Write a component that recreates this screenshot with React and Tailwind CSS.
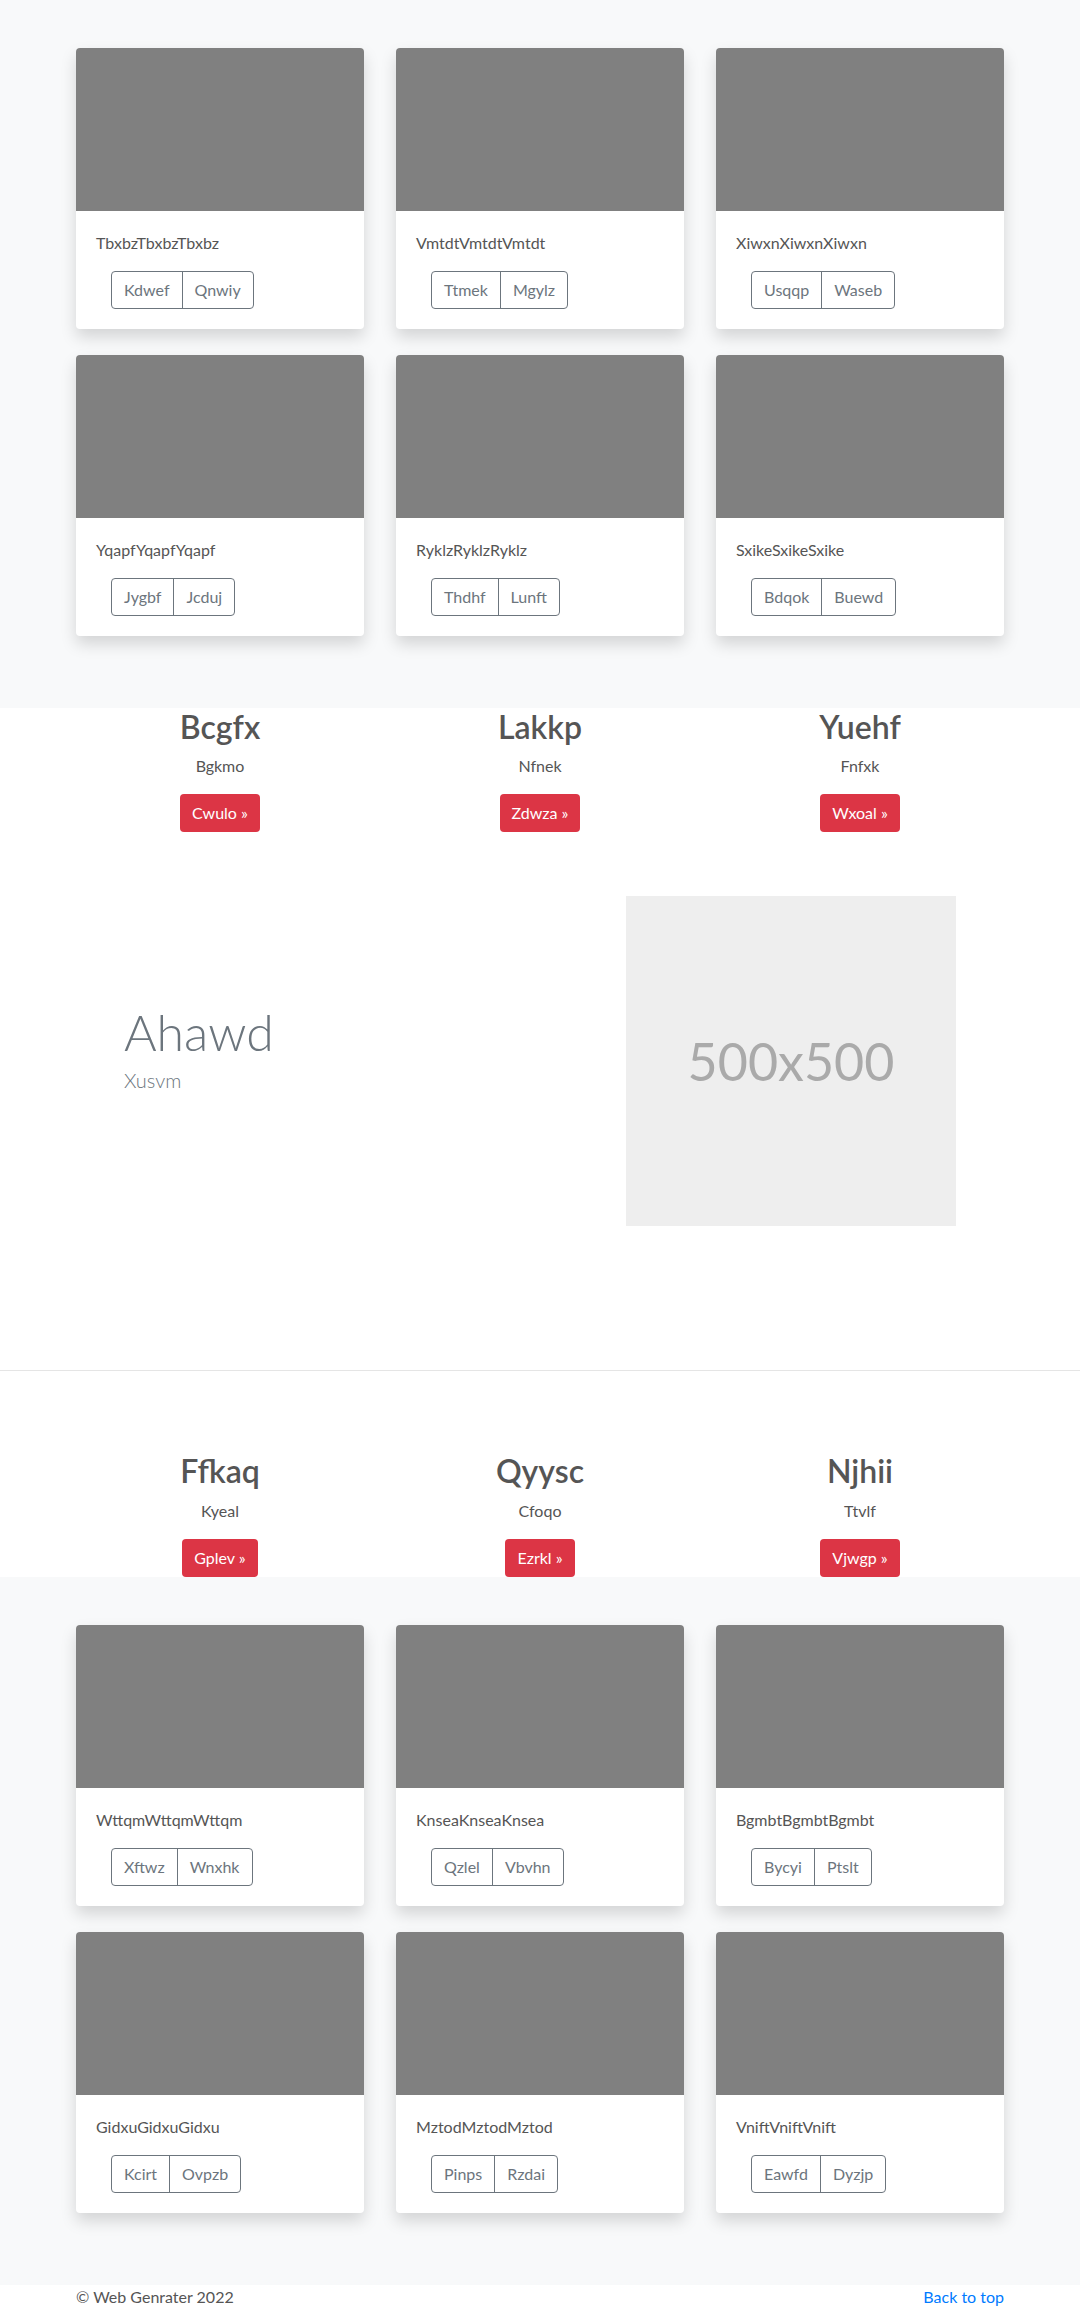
const topCards = [
  { title: "TbxbzTbxbzTbxbz", a: "Kdwef", b: "Qnwiy" },
  { title: "VmtdtVmtdtVmtdt", a: "Ttmek", b: "Mgylz" },
  { title: "XiwxnXiwxnXiwxn", a: "Usqqp", b: "Waseb" },
  { title: "YqapfYqapfYqapf", a: "Jygbf", b: "Jcduj" },
  { title: "RyklzRyklzRyklz", a: "Thdhf", b: "Lunft" },
  { title: "SxikeSxikeSxike", a: "Bdqok", b: "Buewd" },
];

const bottomCards = [
  { title: "WttqmWttqmWttqm", a: "Xftwz", b: "Wnxhk" },
  { title: "KnseaKnseaKnsea", a: "Qzlel", b: "Vbvhn" },
  { title: "BgmbtBgmbtBgmbt", a: "Bycyi", b: "Ptslt" },
  { title: "GidxuGidxuGidxu", a: "Kcirt", b: "Ovpzb" },
  { title: "MztodMztodMztod", a: "Pinps", b: "Rzdai" },
  { title: "VniftVniftVnift", a: "Eawfd", b: "Dyzjp" },
];

const features1 = [
  { h: "Bcgfx", p: "Bgkmo", btn: "Cwulo" },
  { h: "Lakkp", p: "Nfnek", btn: "Zdwza" },
  { h: "Yuehf", p: "Fnfxk", btn: "Wxoal" },
];

const features2 = [
  { h: "Ffkaq", p: "Kyeal", btn: "Gplev" },
  { h: "Qyysc", p: "Cfoqo", btn: "Ezrkl" },
  { h: "Njhii", p: "Ttvlf", btn: "Vjwgp" },
];

function Card({ title, a, b }) {
  return (
    <div className="bg-white rounded-[4px] overflow-hidden shadow-[0_8px_16px_rgba(0,0,0,0.15)]">
      <div className="h-[163px] bg-[#808080]" />
      <div className="p-5">
        <p className="text-[16px] leading-6 text-[#555] mb-4">{title}</p>
        <div className="ml-[15px] inline-flex border border-[#6c757d] rounded-[4px] text-[#6c757d] text-[16px] leading-6">
          <span className="px-3 py-[6px]">{a}</span>
          <span className="px-3 py-[6px] border-l border-[#6c757d]">{b}</span>
        </div>
      </div>
    </div>
  );
}

function Album({ cards }) {
  return (
    <section className="bg-[#f8f9fa] pt-12 pb-[72px]">
      <div className="w-[928px] mx-auto grid grid-cols-3 gap-x-8 gap-y-[26px]">
        {cards.map((c) => (
          <Card key={c.title} {...c} />
        ))}
      </div>
    </section>
  );
}

function Features({ items }) {
  return (
    <div className="w-[960px] mx-auto grid grid-cols-3 text-center">
      {items.map((f) => (
        <div key={f.h} className="flex flex-col items-center">
          <h2 className="text-[32px] leading-[1.2] font-semibold text-[#555] mb-2">{f.h}</h2>
          <p className="text-[16px] leading-6 text-[#555] mb-4">{f.p}</p>
          <span className="bg-[#dc3545] text-white text-[16px] leading-6 px-3 py-[7px] rounded-[4px]">
            {f.btn} »
          </span>
        </div>
      ))}
    </div>
  );
}

export default function App() {
  return (
    <div className="font-[Lato,sans-serif] bg-white min-h-[2307px]">
      <Album cards={topCards} />

      <Features items={features1} />

      <section className="pt-16 pb-[144px]">
        <div className="w-[960px] mx-auto flex">
          <div className="w-1/2 pl-16 pt-[106px]">
            <h1 className="text-[50px] leading-[1.2] font-light text-[#6c757d]">Ahawd</h1>
            <p className="text-[20px] leading-[1.5] font-light text-[#6c757d] mt-[3px]">Xusvm</p>
          </div>
          <div className="w-1/2 flex justify-end pr-16">
            <div className="w-[330px] h-[330px] bg-[#eeeeee] flex items-center justify-center">
              <span className="text-[52px] text-[#aaaaaa]">500x500</span>
            </div>
          </div>
        </div>
      </section>

      <div className="border-t border-[#e5e5e5]" />

      <div className="pt-[81px]">
        <Features items={features2} />
      </div>

      <Album cards={bottomCards} />

      <footer className="w-[928px] mx-auto flex justify-between text-[16px] leading-6 pb-12">
        <span className="text-[#555]">© Web Genrater 2022</span>
        <a href="#" className="text-[#007bff]">Back to top</a>
      </footer>
    </div>
  );
}
